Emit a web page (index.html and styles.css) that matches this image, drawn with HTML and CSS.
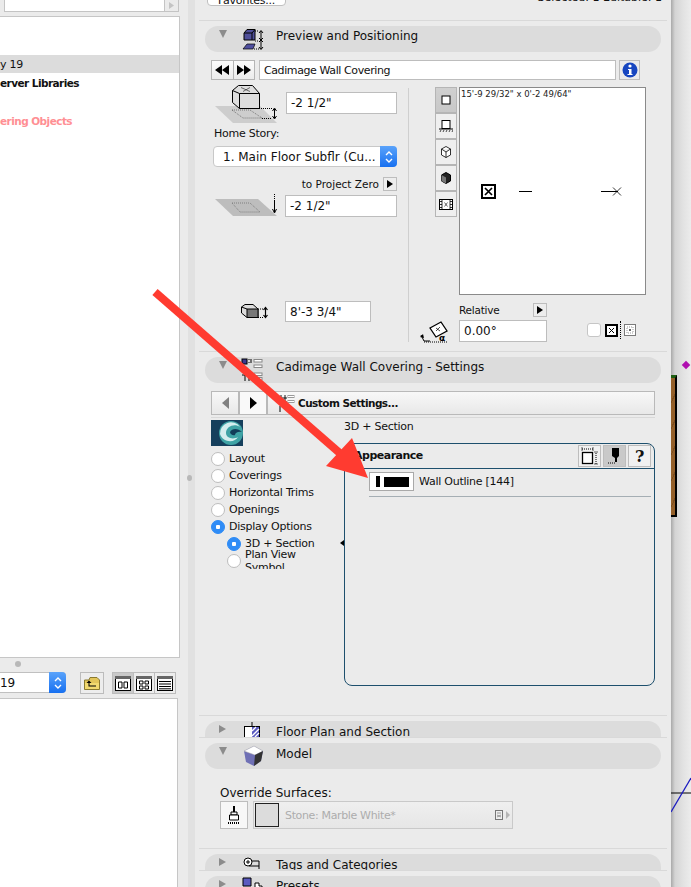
FILE: index.html
```html
<!DOCTYPE html>
<html lang="en">
<head>
<meta charset="utf-8">
<title>Cadimage Wall Covering - Settings</title>
<link rel="stylesheet" href="styles.css">
</head>
<body>
<div class="app">
  <aside class="left">
    <div class="left-top"><div class="search"></div><div class="search-arrow"><svg width="5" height="7"><path d="M0 0L5 3.500L0 7Z" fill="#c4c4c4"/></svg></div></div>
    <div class="list upper">
      <div class="li selected">y 19</div>
      <div class="li bold">erver Libraries</div>
      <div class="li"></div>
      <div class="li bold pink">ering Objects</div>
    </div>
    <div class="dot-row"><span class="grip"></span></div>
    <div class="left-tools">
      <div class="mini-select"><span>19</span><span class="stepper small"><svg width="10" height="14" viewBox="0 0 10 14"><path d="M2 5L5 2L8 5M2 9L5 12L8 9" fill="none" stroke="#fff" stroke-width="1.4"/></svg></span></div>
      <div class="tool folder"><svg width="16" height="13" viewBox="0 0 16 13"><path d="M0.5 3H5L6 0.5H13L15.5 3V12.5H0.5Z" fill="#e3c65a" stroke="#8a7a30"/><path d="M1 6H15V12H1Z" fill="#f2da70"/><path d="M5 3.5L2.5 6H4.5V9.5H12V8.5H5.5V6H7.5Z" fill="#000"/></svg></div>
      <div class="tool-group">
        <div class="tool view on"><svg width="16" height="15" viewBox="0 0 16 15"><rect x=".5" y=".5" width="15" height="14" fill="#fff" stroke="#000"/><rect width="16" height="3" fill="#666"/><path d="M3.5 6H7V12H3.5ZM9 6H12.5V12H9Z" fill="none" stroke="#000"/></svg></div>
        <div class="tool view"><svg width="16" height="15" viewBox="0 0 16 15"><rect x=".5" y=".5" width="15" height="14" fill="#fff" stroke="#000"/><rect width="16" height="3" fill="#666"/><path d="M3.5 5H7V8H3.5ZM9 5H12.5V8H9ZM3.5 10H7V13H3.5ZM9 10H12.5V13H9Z" fill="none" stroke="#000"/></svg></div>
        <div class="tool view"><svg width="16" height="15" viewBox="0 0 16 15"><rect x=".5" y=".5" width="15" height="14" fill="#fff" stroke="#000"/><rect width="16" height="3" fill="#666"/><path d="M2 5.500H14M2 8H14M2 10.500H14M2 12.800H14" stroke="#000"/></svg></div>
      </div>
    </div>
    <div class="list lower"></div>
  </aside>

  <div class="split"><span class="split-dark"><span class="grip split-grip"></span></span></div>

  <main class="panel">
    <div class="toprow">
      <div class="fav">Favorites...</div>
      <div class="selinfo">Selected: 1 Editable: 1</div>
    </div>

    <section class="sec-head">
      <span class="tri down"></span>
      <svg class="head-icon" width="26" height="24" viewBox="0 0 26 24"><path d="M3 6L6 2.500H14V13H3Z" fill="#4f4f9a" stroke="#000"/><path d="M3 6H11V13M11 6L14 2.500" fill="none" stroke="#000"/><path d="M2 22L6 17H14L12 22Z" fill="#5050a0" stroke="#000" stroke-width=".7"/><path d="M20 4V22M18 6L20 3.500L22 6M18 11L20 13L22 11M18 15L20 13L22 15M18 20L20 22.500L22 20" fill="none" stroke="#000"/><path d="M14 4H18M14 14H18M13 22H18" stroke="#000" stroke-dasharray="1 1"/></svg>
      <h2>Preview and Positioning</h2>
    </section>

    <div class="nav-row">
      <div class="seg">
        <div class="seg-btn"><svg width="14" height="10"><path d="M7 0V10L0 5ZM14 0V10L7 5Z"/></svg></div>
        <div class="seg-btn"><svg width="14" height="10"><path d="M0 0V10L7 5ZM7 0V10L14 5Z"/></svg></div>
      </div>
      <div class="field name">Cadimage Wall Covering</div>
      <div class="info"><svg width="16" height="16" viewBox="0 0 16 16"><circle cx="8" cy="8" r="7.500" fill="#1746c0"/><circle cx="8" cy="4" r="1.600" fill="#fff"/><path d="M6 7H9.500V12H10.500V13H5.500V12H7V8H6Z" fill="#fff"/></svg></div>
    </div>

    <div class="pos-body">
      <div class="pos-left">
        <div class="pos-row first">
          <svg class="pos-icon" width="66" height="40" viewBox="0 0 66 40"><path d="M0 21H45L62 38H18Z" fill="#cdcdcd"/><path d="M17.500 5.500L23.500 .5H37.500L44.500 8.500V23.500H24.500L17.500 17.500Z" fill="#dedede"/><path d="M17.500 5.500L23.500 .5H37.500L44.500 8.500V23.500H24.500L17.500 17.500ZM17.500 5.500L24.500 8.500H44.500M24.500 8.500V23.500" fill="none" stroke="#000"/><path d="M26 2.500L35 6.500M35 2.500L28 6.500" stroke="#333" stroke-width=".7"/><path d="M17 25H35L47 33H28Z" fill="none" stroke="#555" stroke-width=".7" stroke-dasharray="1 1"/><path d="M44 23.500H57M47 33.500H57" stroke="#000" stroke-dasharray="1 1"/><path d="M59.500 24V33M57.500 26L59.500 23L61.500 26M57.500 31L59.500 34L61.500 31" fill="none" stroke="#000"/></svg>
          <div class="field num w-wide">-2 1/2"</div>
        </div>
        <div class="lbl home">Home Story:</div>
        <div class="select"><span>1. Main Floor Subflr (Cu...</span><span class="stepper"><svg width="10" height="14" viewBox="0 0 10 14"><path d="M2 5L5 2L8 5M2 9L5 12L8 9" fill="none" stroke="#fff" stroke-width="1.4"/></svg></span></div>
        <div class="zero"><span>to Project Zero</span><span class="arrow-btn"><svg width="6" height="8"><path d="M0 0L6 4L0 8Z"/></svg></span></div>
        <div class="pos-row low">
          <svg class="pos-icon" width="66" height="24" viewBox="0 0 66 24"><path d="M0 5H43L62 22H18Z" fill="#bdbdbd"/><path d="M17 9H35L45 18H25Z" fill="none" stroke="#666" stroke-width=".7" stroke-dasharray="1 1"/><path d="M59.500 0V6" stroke="#000" stroke-dasharray="1 1"/><path d="M59.500 6V18M57.500 15L59.500 19L61.500 15" fill="none" stroke="#000"/></svg>
          <div class="field num w-wide">-2 1/2"</div>
        </div>
        <div class="pos-row height">
          <svg class="pos-icon h-icon" width="28" height="15" viewBox="0 0 28 15"><path d="M.5 3L4 .5H12L17 5V13.500H6L.5 9Z" fill="#ddd" stroke="#000"/><path d="M6 5H17V13.500H6Z" fill="#777" stroke="#000"/><path d="M.5 3L6 5" stroke="#000"/><path d="M17 5H22M17 13.500H22" stroke="#000" stroke-dasharray="1 1"/><path d="M24.500 4V13M22.500 6L24.500 3.500L26.500 6M22.500 11L24.500 13.500L26.500 11" fill="none" stroke="#000" stroke-width="1.200"/></svg>
          <div class="field num w-narrow">8'-3 3/4"</div>
        </div>
      </div>

      <div class="vdiv"></div>

      <div class="pos-right">
        <div class="preview-wrap">
          <div class="tabs">
            <div class="tab on"><svg width="10" height="10"><rect x="1" y="1" width="8" height="8" fill="#fff" stroke="#000"/></svg></div>
            <div class="tab"><svg width="14" height="12" viewBox="0 0 14 12"><rect x="3" y=".5" width="8" height="8" fill="#fff" stroke="#000"/><path d="M0 9H14" stroke="#000"/><path d="M1 12L2 10M4 12L5 10M7 12L8 10M10 12L11 10M13 12L14 10" stroke="#000" stroke-width=".7"/></svg></div>
            <div class="tab"><svg width="10" height="12" viewBox="0 0 10 12"><path d="M.5 3L5 .5L9.500 3V9L5 11.500L.5 9ZM.5 3L5 6L9.500 3M5 6V11.500" fill="#fff" stroke="#000" stroke-width=".8"/></svg></div>
            <div class="tab"><svg width="10" height="12" viewBox="0 0 10 12"><path d="M.5 3L5 .5L9.500 3V9L5 11.500L.5 9Z" fill="#222" stroke="#000"/><path d="M.5 3L5 5.500V11.500L.5 9Z" fill="#777"/></svg></div>
            <div class="tab"><svg width="14" height="11" viewBox="0 0 14 11"><rect x=".5" y=".5" width="13" height="10" fill="#fff" stroke="#000"/><path d="M3 0V11M11 0V11M.5 2.500H3M.5 5.500H3M.5 8.500H3M11 2.500H13.500M11 5.500H13.500M11 8.500H13.500" stroke="#000" stroke-width=".8"/><path d="M5.500 3.500L8.500 7.500M8.500 3.500L5.500 7.500" stroke="#000" stroke-width=".6"/></svg></div>
          </div>
          <div class="preview">
            <div class="dims">15'-9 29/32" x 0'-2 49/64"</div>
            <svg class="symbols" width="183" height="110" viewBox="0 0 183 110"><rect x="21" y="86" width="13" height="13" fill="#fff" stroke="#000" stroke-width="2"/><path d="M24 89L31 96M31 89L24 96" stroke="#000" stroke-width="1.700"/><path d="M58 92.500H71" stroke="#000" stroke-width="1"/><path d="M140 92.500H157" stroke="#000" stroke-width="1"/><path d="M152 88.500L160 96.500M160 88.500L152 96.500" stroke="#000" stroke-width=".8"/></svg>
          </div>
        </div>
        <div class="angle-row">
          <svg class="angle-icon" width="28" height="24" viewBox="0 0 28 24"><path d="M10 8L21 2L27 11L16 17Z" fill="#fff" stroke="#000" stroke-width="1.300"/><path d="M16 8L20 11M20 7L16 11" stroke="#000" stroke-width=".7"/><path d="M1 15L4 21H10" fill="none" stroke="#000"/><path d="M4 22H28" stroke="#000" stroke-dasharray="1 1"/><path d="M0 17L3 14L4 18Z"/><text x="19" y="21" class="alpha">α</text></svg>
          <div class="angle-col">
            <div class="relative"><span>Relative</span><span class="arrow-btn"><svg width="6" height="8"><path d="M0 0L6 4L0 8Z"/></svg></span></div>
            <div class="field num w-angle">0.00°</div>
          </div>
          <div class="check-group">
            <span class="check"></span>
            <svg width="13" height="13" viewBox="0 0 13 13"><rect x="1" y="1" width="11" height="11" fill="#fff" stroke="#000" stroke-width="2"/><path d="M4 4L9 9M9 4L4 9" stroke="#000"/></svg>
            <span class="vdots"></span>
            <svg width="12" height="12" viewBox="0 0 12 12"><rect x=".5" y=".5" width="11" height="11" fill="#fff" stroke="#000" stroke-dasharray="1 1"/><path d="M3 3H9V9H3Z" fill="none" stroke="#555" stroke-width=".6" stroke-dasharray="1 1"/><path d="M5 5L7 7M7 5L5 7" stroke="#000" stroke-width=".6"/></svg>
          </div>
        </div>
      </div>
    </div>

    <div class="sep sep-a"></div>

    <section class="sec-head">
      <span class="tri down"></span>
      <svg class="head-icon" width="26" height="24" viewBox="0 0 26 24"><rect x="1" y="1" width="5" height="5" fill="#3a3a90" stroke="#000"/><path d="M8 1V2M8 4V5M10 1V5" stroke="#000"/><rect x="13" y="1.500" width="8" height="2.500" fill="#fff" stroke="#888"/><rect x="13" y="7" width="8" height="2.500" fill="#fff" stroke="#888"/><rect x="13" y="15" width="8" height="2.500" fill="#fff" stroke="#888"/><rect x="13" y="19.500" width="8" height="2.500" fill="#fff" stroke="#888"/><path d="M1 17H10M4 15V23M8 15V23" stroke="#000"/></svg>
      <h2>Cadimage Wall Covering - Settings</h2>
    </section>

    <div class="custom-bar">
      <div class="cb-btn"><svg width="7" height="12"><path d="M7 0V12L0 6Z" fill="#808080"/></svg></div>
      <div class="cb-btn white"><svg width="7" height="12"><path d="M0 0V12L7 6Z"/></svg></div>
      <div class="cb-title">
        <svg width="18" height="18" viewBox="0 0 18 18"><path d="M1 4H10M4 1V10M8 1V10M1 8H10" stroke="#000" stroke-width=".9" fill="none"/><rect x="11" y="1.500" width="6" height="2" fill="#fff" stroke="#999"/><rect x="11" y="6.500" width="6" height="2" fill="#fff" stroke="#999"/><path d="M3 12V18" stroke="#000"/></svg>
        <b>Custom Settings...</b>
      </div>
    </div>
    <div class="sep sep-b"></div>

    <div class="set-body">
      <div class="set-nav">
        <svg class="logo" width="32" height="26" viewBox="0 0 32 26"><rect width="32" height="26" fill="#153f5c"/><circle cx="20" cy="13" r="12" fill="#3fa3a5"/><path d="M9 14A11 11 0 0 1 29 7C24 3 15 6 15 13C15 18 22 20 27 17C24 23 12 23 9 14Z" fill="#d4eeee"/><path d="M19 12C21 8 27 8 31 12C27 11 24 13 24 15C22 16 19 14 19 12Z" fill="#123c58"/></svg>
        <div class="radio-list">
          <div class="radio"><i></i>Layout</div>
          <div class="radio"><i></i>Coverings</div>
          <div class="radio"><i></i>Horizontal Trims</div>
          <div class="radio"><i></i>Openings</div>
          <div class="radio on"><i></i>Display Options</div>
          <div class="radio sub on"><i></i>3D + Section</div>
          <div class="radio sub wrap"><i></i><span>Plan View<br>Symbol</span></div>
        </div>
      </div>
      <div class="handle"><svg width="4" height="6"><path d="M4 0V6L0 3Z"/></svg></div>
      <div class="set-main">
        <div class="page-title">3D + Section</div>
        <div class="appearance">
          <div class="app-head">
            <b>Appearance</b>
            <div class="app-btns">
              <div class="sq"><svg width="18" height="18" viewBox="0 0 18 18"><rect x="1.500" y="5.500" width="10" height="11" fill="#fff" stroke="#000" stroke-width="1.300"/><path d="M1 2H12M15 6V17" stroke="#000" stroke-dasharray="1 1"/><path d="M1 0V4M12 0V4M13 5H17M13 17H17" stroke="#000" stroke-width=".6"/></svg></div>
              <div class="sq on"><svg width="16" height="18" viewBox="0 0 16 18"><path d="M5 1H12V9L10 11V15H8V11L5 9Z" fill="#000"/><path d="M1 16H9" stroke="#000" stroke-dasharray="1 1"/></svg></div>
              <div class="sq q">?</div>
            </div>
          </div>
          <div class="pen-row">
            <div class="pen-btn"><span class="pen-a"></span><span class="pen-b"></span></div>
            <span>Wall Outline [144]</span>
          </div>
          <div class="pen-line"></div>
        </div>
      </div>
    </div>

    <div class="sep sep-c"></div>
    <section class="sec-head clip">
      <span class="tri right"></span>
      <svg class="head-icon" width="26" height="22" viewBox="0 0 26 22"><rect x="3.500" y="4.500" width="15" height="16" fill="#fff" stroke="#000"/><path d="M11 5H18V15H11Z" fill="#5a5ac0"/><path d="M11 9L15 5M11 14L18 7M14 15L18 11" stroke="#fff" stroke-width="1.300"/><path d="M11 0V4" stroke="#000"/></svg>
      <h2>Floor Plan and Section</h2>
    </section>
    <div class="sep sep-d"></div>
    <section class="sec-head">
      <span class="tri down"></span>
      <svg class="head-icon" width="26" height="24" viewBox="0 0 26 24"><path d="M3 7L13 2L22 7L20 17L13 22L5 18Z" fill="#6f70b5"/><path d="M3 7L13 2L22 7L14 11Z" fill="#fff" stroke="#aaa" stroke-width=".5"/><path d="M22 7L14 11L13 22L20 17Z" fill="#333"/></svg>
      <h2>Model</h2>
    </section>
    <div class="lbl override">Override Surfaces:</div>
    <div class="surface-row">
      <div class="brush"><svg width="14" height="20" viewBox="0 0 14 20"><path d="M6 1H8V7H6Z" fill="#000"/><path d="M4 7H10V10H4Z" fill="none" stroke="#000"/><path d="M2.500 10H11.500V15H2.500Z" fill="#fff" stroke="#000"/><path d="M1 18H13" stroke="#000" stroke-dasharray="1 1" stroke-width="2"/></svg></div>
      <div class="surface">
        <span class="swatch"></span>
        <span class="surf-name">Stone: Marble White*</span>
        <svg class="surf-icon" width="16" height="10" viewBox="0 0 16 10"><rect x=".5" y=".5" width="7" height="9" fill="#eee" stroke="#777"/><path d="M2 3H6M2 5L6 7M6 5L2 7" stroke="#777" stroke-width=".7"/><path d="M11 1V9L15 5Z" fill="#b5b5b5"/></svg>
      </div>
    </div>
    <div class="sep sep-e"></div>
    <section class="sec-head clip">
      <span class="tri right"></span>
      <svg class="head-icon" width="26" height="22" viewBox="0 0 26 22"><circle cx="7" cy="7" r="4" fill="#fff" stroke="#000"/><path d="M5 7H9M7 5V9" stroke="#000"/><path d="M11 6H18V14M8 11H18" stroke="#000" fill="none"/></svg>
      <h2>Tags and Categories</h2>
    </section>
    <div class="sep sep-d"></div>
    <section class="sec-head">
      <span class="tri right"></span>
      <svg class="head-icon" width="26" height="22" viewBox="0 0 26 22"><path d="M2 1H10V9H2Z" fill="#5a5ac0" stroke="#000"/><path d="M14 6H18V9H21V13H14Z" fill="#fff" stroke="#000"/></svg>
      <h2>Presets</h2>
    </section>
  </main>

  <div class="canvas">
    <span class="diamond"></span>
    <div class="wall"></div>
    <svg class="lines" width="20" height="40" viewBox="0 0 20 40"><path d="M0 17H20" stroke="#000"/><path d="M0 36L20 2" stroke="#1a1ac0" stroke-width="1.300"/></svg>
  </div>

  <svg class="red-arrow" width="691" height="887" viewBox="0 0 691 887"><path d="M155 292L342 455" stroke="#ff3b30" stroke-width="8" fill="none"/><path d="M368 478L352 438L326 466Z" fill="#ff3b30"/></svg>
</div>
</body>
</html>
```
FILE: styles.css
```css
* { box-sizing: border-box; }
html, body { margin: 0; padding: 0; }
body { background: #ebebeb; font-family: "DejaVu Sans", sans-serif; font-size: 11px; letter-spacing: -0.25px; color: #111; overflow: hidden; }
h2 { margin: 1px 0 0; font-size: 12px; font-weight: 400; line-height: 14px; letter-spacing: 0; }
.sec-head.clip h2, .sec-head:has(+ .lbl) h2 { margin-top: 2px; }
svg { display: block; flex: none; }
b { letter-spacing: -0.55px; font-size: 10.500px; }

.app { position: relative; display: flex; width: 691px; height: 887px; overflow: hidden; }

/* left column */
.left { width: 180px; flex: none; display: flex; flex-direction: column; height: 887px; }
.left-top { height: 12px; display: flex; }
.search { width: 161px; margin-left: 4px; background: #fff; border: 1px solid #c4c4c4; border-top: 0; }
.search-arrow { width: 14px; padding: 2px 0 0 4px; border-bottom: 1px solid #c4c4c4; border-right: 1px solid #c4c4c4; }
.list { background: #fff; border: 1px solid #c6c6c6; border-left: 0; }
.upper { margin-top: 4px; height: 642px; padding-top: 38px; }
.li { height: 19px; line-height: 20px; font-size: 11px; }
.selected { background: #dcdcdc; height: 18px; margin-bottom: 1px; }
.bold { font-weight: 700; font-size: 10.500px; letter-spacing: -0.55px; line-height: 18px; }
.pink { color: #ff8f94; }
.dot-row { height: 14px; padding: 3px 0 0 15px; }
.grip { display: block; width: 6px; height: 6px; border-radius: 50%; background: #b8b8b8; }
.left-tools { height: 22px; display: flex; align-items: flex-start; }
.mini-select { width: 66px; height: 21px; background: #fff; border: 1px solid #c0c0c0; border-left: 0; border-radius: 0 4px 4px 0; display: flex; justify-content: space-between; align-items: center; font-size: 12px; }
.stepper { display: flex; align-items: center; justify-content: center; background: linear-gradient(#5aa3fb, #1770f0); border-radius: 0 4px 4px 0; }
.stepper.small { width: 17px; height: 21px; margin-right: -1px; }
.tool { width: 24px; height: 22px; background: #ededed; border: 1px solid #bcbcbc; display: flex; align-items: center; justify-content: center; }
.folder { margin-left: 14px; }
.tool-group { display: flex; margin-left: 8px; }
.view { width: 22px; }
.view + .view { margin-left: -1px; }
.view.on { background: #c9c9c9; }
.lower { margin-top: 4px; width: 178px; flex: 1; border-bottom: 0; }

/* splitter */
.split { width: 15px; flex: none; padding-left: 8px; }
.split-dark { display: block; width: 7px; height: 887px; background: #e1e1e1; padding-top: 475px; }
.split-grip { margin-left: -1px; width: 5px; height: 6px; }

/* main panel */
.panel { width: 476px; flex: none; height: 887px; overflow: hidden; display: flex; flex-direction: column; background: #ebebeb; }
.toprow { height: 21px; margin: 0 4px; flex: none; border-bottom: 1px solid #d9d9d9; position: relative; overflow: hidden; }
.fav { width: 79px; height: 15px; margin: -9px 0 0 8px; background: #fff; border: 1px solid #c0c0c0; border-radius: 4px; text-align: center; font-size: 11px; line-height: 17px; }
.selinfo { position: absolute; right: 5px; top: -9px; font-size: 11px; line-height: 14px; letter-spacing: 0; }

.sec-head { flex: none; margin: 5px 10px 0; height: 26px; border-radius: 13px; background: #dcdcdc; display: flex; align-items: flex-start; padding-top: 2px; overflow: hidden; }
.sec-head.clip { height: 16px; border-radius: 13px 13px 0 0; }
.tri { flex: none; width: 0; height: 0; margin-left: 14px; margin-top: 2px; }
.tri.down { border-left: 4px solid transparent; border-right: 4px solid transparent; border-top: 8px solid #8c8c8c; }
.tri.right { border-top: 4px solid transparent; border-bottom: 4px solid transparent; border-left: 7px solid #8c8c8c; margin-right: 1px; }
.head-icon { margin-left: 14px; margin-right: 9px; margin-top: -1px; }

.field { background: #fff; border: 1px solid #bdbdbd; padding-left: 4px; display: flex; align-items: center; }
.nav-row { flex: none; display: flex; margin: 8px 0 0 16px; height: 20px; }
.seg { display: flex; width: 44px; }
.seg-btn { width: 23px; height: 20px; background: linear-gradient(#fbfbfb, #ececec); border: 1px solid #b5b5b5; display: flex; align-items: center; justify-content: center; }
.seg-btn + .seg-btn { margin-left: -1px; }
.name { width: 357px; margin-left: 4px; font-size: 11px; letter-spacing: -0.4px; }
.info { width: 21px; height: 20px; margin-left: 3px; border: 1px solid #bdbdbd; display: flex; align-items: center; justify-content: center; }

.pos-body { flex: none; display: flex; height: 258px; margin-top: 7px; padding-left: 18px; }
.pos-left { width: 184px; flex: none; display: flex; flex-direction: column; }
.pos-row { display: flex; align-items: flex-start; }
.pos-row.first { height: 35px; }
.pos-row.first .pos-icon { margin: -2px 5px 0 2px; }
.pos-row.first .field { margin-top: 5px; }
.pos-row.low { margin-top: 4px; height: 22px; }
.pos-row.low .pos-icon { margin: -1px 4px 0 2px; }
.pos-row.height { margin-top: 84px; height: 21px; }
.pos-row.height .h-icon { margin: 3px 16px 0 28px; }
.num { font-size: 12px; height: 22px; letter-spacing: 0; }
.w-wide { width: 112px; }
.w-narrow { width: 86px; height: 21px; }
.w-angle { width: 88px; }
.lbl { font-size: 11px; line-height: 14px; }
.home { margin: 5px 0 0 1px; }
.select { width: 184px; height: 21px; margin-top: 5px; background: #fff; border: 1px solid #c8c8c8; border-radius: 4px; display: flex; justify-content: space-between; align-items: center; padding-left: 9px; font-size: 12px; letter-spacing: 0; }
.select .stepper { width: 17px; height: 21px; margin-right: -1px; }
.zero { display: flex; justify-content: flex-end; align-items: center; margin-top: 10px; height: 14px; font-size: 10.500px; gap: 4px; letter-spacing: 0; }
.arrow-btn { width: 14px; height: 14px; border: 1px solid #bdbdbd; background: #ededed; display: flex; align-items: center; justify-content: center; }

.vdiv { width: 1px; flex: none; height: 254px; margin: 1px 0 0 11px; background: #cfcfcf; }
.pos-right { margin-left: 26px; display: flex; flex-direction: column; flex: none; width: 212px; }
.preview-wrap { display: flex; height: 208px; }
.tabs { width: 22px; flex: none; display: flex; flex-direction: column; gap: 0; margin-right: 2px; }
.tab { width: 22px; height: 26px; background: #efefef; border: 1px solid #b5b5b5; display: flex; align-items: center; justify-content: center; }
.tab.on { background: linear-gradient(#d0d0d0, #c8c8c8); }
.preview { width: 187px; height: 208px; background: #fff; border: 1px solid #8a8a8a; padding: 1px; }
.dims { font-size: 8.500px; line-height: 10px; color: #222; height: 10px; white-space: nowrap; letter-spacing: 0; }
.angle-row { display: flex; margin: 8px 0 0 -15px; }
.angle-icon { margin-top: 17px; margin-right: 11px; }
.alpha { font-size: 9px; font-weight: 700; font-family: "DejaVu Sans", sans-serif; }
.angle-col { width: 88px; display: flex; flex-direction: column; }
.relative { display: flex; justify-content: space-between; align-items: center; height: 14px; margin-bottom: 3px; font-size: 10.500px; }
.check-group { display: flex; align-items: center; gap: 4px; margin: 20px 0 0 40px; height: 14px; }
.check { width: 14px; height: 14px; background: #fff; border: 1px solid #c6c6c6; border-radius: 3px; }
.vdots { width: 1px; height: 18px; border-left: 1px dotted #000; margin: 0 -1px 0 -2px; }

.sep { flex: none; height: 1px; background: #d9d9d9; }
.sep-a { margin: 6px 4px 0; }
.sep-b { margin: 2px 16px 0; width: 444px; }
.sep-c { margin: 29px 4px 0; }
.sep-d { margin: 0 4px; }
.sep-e { margin: 19px 4px 0; }

.custom-bar { flex: none; display: flex; margin: 8px 0 0 16px; width: 444px; height: 24px; border: 1px solid #b9b9b9; background: linear-gradient(#f8f8f8, #e8e8e8); }
.cb-btn { width: 28px; height: 22px; display: flex; align-items: center; justify-content: center; border-right: 2px solid #b9b9b9; }
.cb-btn.white { background: #f9f9f9; }
.cb-title { display: flex; align-items: center; padding-left: 9px; gap: 3px; font-size: 11px; }

.set-body { flex: none; display: flex; height: 266px; margin-top: 2px; padding-left: 16px; }
.set-nav { width: 129px; flex: none; height: 149px; overflow: hidden; }
.logo { margin-bottom: 4px; }
.radio { display: flex; align-items: center; height: 17px; font-size: 11px; white-space: nowrap; }
.radio i { flex: none; width: 14px; height: 14px; margin-right: 4px; border-radius: 50%; background: #fff; border: 1px solid #bdbdbd; }
.radio.on i { background: #2f8cf6 radial-gradient(circle, #fff 0 2px, transparent 2.500px); border-color: #2f8cf6; }
.radio.sub { padding-left: 16px; }
.radio.wrap { height: 26px; line-height: 13px; align-items: flex-start; margin-top: 2px; }
.radio.wrap span { margin-top: -6px; }
.handle { width: 4px; flex: none; margin-top: 120px; }
.set-main { width: 311px; flex: none; }
.page-title { height: 23px; font-size: 11px; line-height: 14px; }
.appearance { height: 243px; border: 1px solid #1d4f6d; border-radius: 8px; }
.app-head { height: 25px; border-bottom: 1px solid #1d4f6d; display: flex; justify-content: space-between; align-items: center; padding: 0 3px 0 9px; font-size: 11px; }
.app-head b { font-size: 11px; letter-spacing: -0.5px; margin-top: -2px; }
.app-btns { display: flex; gap: 2px; }
.sq { width: 23px; height: 22px; background: #f1f1f1; border: 1px solid #bdbdbd; display: flex; align-items: center; justify-content: center; }
.sq.on { background: #c9c9c9; }
.q { font-family: "DejaVu Serif", serif; font-weight: 700; font-size: 16px; }
.pen-row { display: flex; align-items: center; margin: 3px 0 0 24px; height: 19px; gap: 5px; font-size: 11px; }
.pen-btn { width: 45px; height: 19px; border: 1px solid #a9a9a9; background: #fff; display: flex; align-items: center; padding-left: 6px; gap: 4px; }
.pen-a { width: 4px; height: 11px; background: #000; }
.pen-b { width: 25px; height: 10px; background: #000; }
.pen-line { margin: 5px 3px 0 24px; height: 1px; background: #a5aeb4; }

.override { margin: 17px 0 0 25px; font-size: 12px; flex: none; letter-spacing: 0; }
.surface-row { flex: none; display: flex; margin: 1px 0 0 25px; gap: 5px; height: 28px; }
.brush { width: 28px; height: 28px; background: #f7f7f7; border: 1px solid #bdbdbd; display: flex; align-items: center; justify-content: center; }
.surface { width: 260px; height: 28px; border: 1px solid #c9c9c9; background: linear-gradient(#efefef, #e6e6e6); display: flex; align-items: center; padding-left: 1px; }
.swatch { width: 24px; height: 24px; background: #dcdcdc; border: 1px solid #222; }
.surf-name { margin-left: 6px; flex: 1; color: #adadad; font-size: 11px; letter-spacing: -0.35px; }
.surf-icon { margin-right: 1px; }

/* drawing canvas behind the window */
.canvas { position: relative; width: 20px; flex: none; height: 887px; background: linear-gradient(90deg, #a9a9a9 0, #d4d4d4 4px, #e2e2e2 12px, #ececec 20px); }
.diamond { position: absolute; left: 12px; top: 362px; width: 6px; height: 6px; background: #b010b0; transform: rotate(45deg); }
.wall { position: absolute; left: 0; top: 375px; width: 6px; height: 142px; background: repeating-linear-gradient(115deg, #94602a 0 10px, #7d4f20 10px 11px); border-top: 3px solid #1e5e12; border-right: 2px solid #000; border-bottom: 2px solid #000; }
.lines { position: absolute; left: 0; top: 776px; }

.red-arrow { position: absolute; left: 0; top: 0; pointer-events: none; }
```
